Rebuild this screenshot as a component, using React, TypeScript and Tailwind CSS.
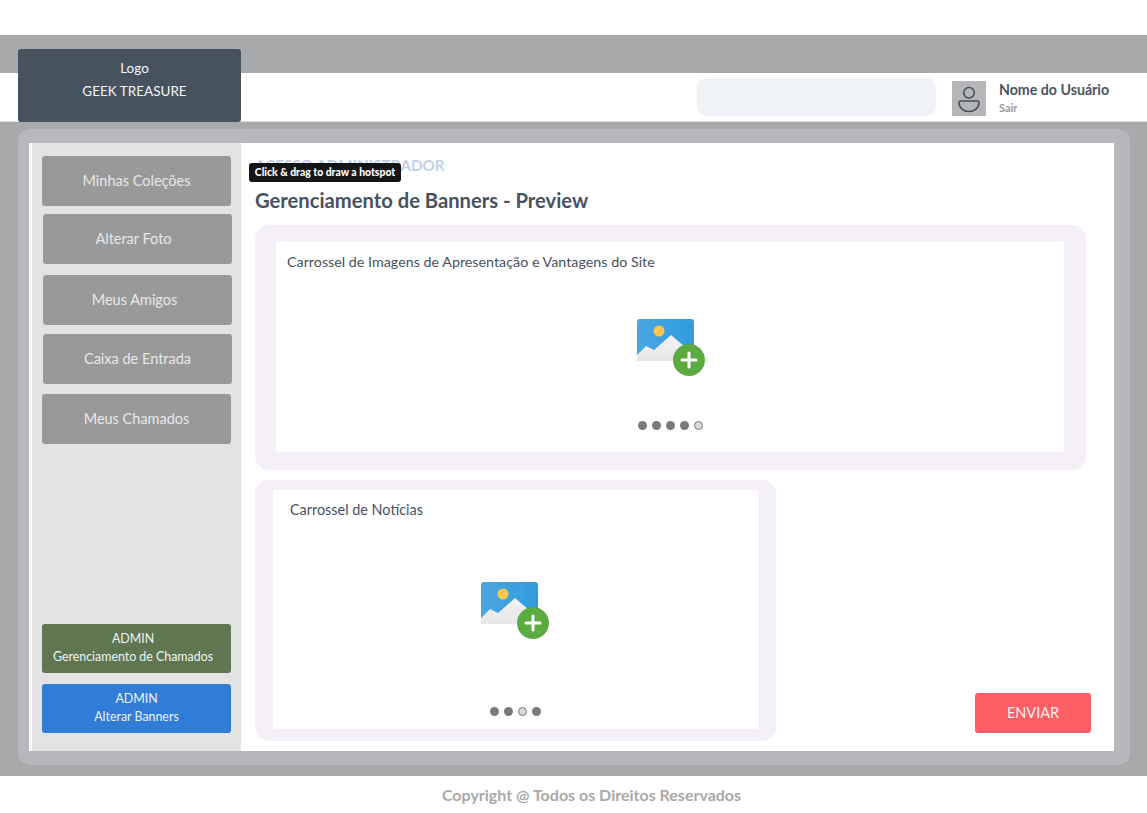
import React from "react";

function AddImage() {
  return (
    <svg width="70" height="58" viewBox="0 0 70 58" className="block blur-[0.4px]">
      <defs>
        <linearGradient id="sky" x1="0" y1="0" x2="1" y2="0">
          <stop offset="0" stopColor="#4aa7e2" />
          <stop offset="1" stopColor="#319bdc" />
        </linearGradient>
        <linearGradient id="mtn" x1="0" y1="0" x2="0" y2="1">
          <stop offset="0" stopColor="#f4f4f4" />
          <stop offset="1" stopColor="#e6e6e6" />
        </linearGradient>
      </defs>
      <path d="M3 0H54a3 3 0 0 1 3 3V38H0V3a3 3 0 0 1 3-3Z" fill="url(#sky)" />
      <circle cx="22" cy="12" r="5.5" fill="#fbc84f" />
      <path d="M0 36 L9 27 L17 31 L34 16 L48 28 L57 36 V42 H0 Z" fill="url(#mtn)" />
      <circle cx="52" cy="41" r="16" fill="#5bab42" />
      <path d="M52 34V48M45 41H59" stroke="#fff" strokeWidth="3" strokeLinecap="round" />
    </svg>
  );
}

function Dots({ hollow, count }: { hollow: number; count: number }) {
  return (
    <div className="flex items-center gap-[5px]">
      {Array.from({ length: count }).map((_, i) => (
        <span
          key={i}
          className={
            i === hollow
              ? "h-[9px] w-[9px] rounded-full border border-[#7a7a7a] bg-[#d8d8d8]"
              : "h-[9px] w-[9px] rounded-full bg-[#7a7a7a]"
          }
        />
      ))}
    </div>
  );
}

function SideButton({ label, className }: { label: string; className: string }) {
  return (
    <div
      className={
        "flex h-[50px] w-[189px] items-center justify-center rounded-[3px] bg-[#999999] pb-[1px] text-[14.5px] text-[#e8e8e8] " +
        className
      }
    >
      {label}
    </div>
  );
}

function AdminButton({ line, color, className }: { line: string; color: string; className: string }) {
  return (
    <div
      className={
        "flex h-[49px] w-[189px] flex-col items-center justify-center rounded-[3px] pb-[2px] text-[12.4px] leading-[18px] text-[#eef3f8] " +
        color +
        " " +
        className
      }
    >
      <span>ADMIN</span>
      <span>{line}</span>
    </div>
  );
}

export default function App() {
  return (
    <div className="flex h-[813px] w-[1147px] flex-col overflow-hidden bg-white font-['Lato','Noto_Sans',sans-serif]">
      <div className="h-[35px] shrink-0 bg-white" />
      <div className="h-[38px] shrink-0 bg-[#a8a9ab]" />
      <header className="flex h-[49px] shrink-0 items-start border-b border-[#dddddd] bg-white">
        <div className="ml-[18px] mt-[-24px] flex h-[73px] w-[223px] flex-col items-center justify-center rounded-[3px] bg-[#47525f] pb-[12px] pl-[10px] text-[13.5px] leading-[23px] text-[#f3f5f7]">
          <span>Logo</span>
          <span>GEEK TREASURE</span>
        </div>
        <div className="ml-[456px] mt-[5px] h-[38px] w-[239px] rounded-[10px] bg-[#eff2f6]" />
        <div className="ml-[16px] mt-[8px] flex h-[35px] w-[34px] items-center justify-center bg-[#b4b6b9]">
          <svg width="24" height="30" viewBox="0 0 24 30" fill="none" stroke="#474d56" strokeWidth="1.5">
            <circle cx="12" cy="8.7" r="5.3" />
            <path d="M3.5 17H20.5Q22 17 22 18.5C22 24 17 27.5 12 27.5C7 27.5 2 24 2 18.5Q2 17 3.5 17Z" strokeLinejoin="round" />
          </svg>
        </div>
        <div className="ml-[13px] mt-[7px] flex flex-col">
          <span className="text-[14.2px] font-bold leading-[19px] text-[#4d5560]">Nome do Usuário</span>
          <span className="mt-[1px] text-[11px] font-bold leading-[16px] text-[#9a9a9a]">Sair</span>
        </div>
      </header>
      <div className="flex h-[654px] shrink-0 flex-col bg-[#a8a9ab] pb-[11px] pl-[18px] pr-[17px] pt-[7px]">
        <div className="flex h-[636px] flex-col rounded-[12px] bg-[#b8b7bc] pb-[14px] pl-[11px] pr-[16px] pt-[14px]">
          <div className="flex h-[608px] bg-white pl-[3px]">
            <aside className="flex w-[209px] shrink-0 flex-col bg-[#e3e3e3] pl-[10px]">
              <SideButton label="Minhas Coleções" className="mt-[13px]" />
              <SideButton label="Alterar Foto" className="ml-[1px] mt-[8px] pr-[8px]" />
              <SideButton label="Meus Amigos" className="ml-[1px] mt-[11px] pr-[6px]" />
              <SideButton label="Caixa de Entrada" className="ml-[1px] mt-[9px]" />
              <SideButton label="Meus Chamados" className="mt-[10px]" />
              <AdminButton line="Gerenciamento de Chamados" color="bg-[#5f7750] pr-[7px]" className="mt-auto" />
              <AdminButton line="Alterar Banners" color="bg-[#317cd6]" className="mb-[18px] mt-[11px]" />
            </aside>
            <main className="relative min-w-0 flex-1 pl-[14px]">
              <div className="pt-[13px] text-[15.2px] font-bold leading-[18px] text-[#c2d1e5]">ACESSO ADMINISTRADOR</div>
              <div className="absolute left-[8px] top-[20px] flex h-[19px] w-[152px] items-center justify-center rounded-[3px] bg-[#151515] text-[10.4px] font-black text-white">
                Click &amp; drag to draw a hotspot
              </div>
              <h1 className="mt-[12px] text-[20.2px] font-bold leading-[28px] text-[#47525f]">
                Gerenciamento de Banners - Preview
              </h1>
              <section className="mt-[11px] h-[245px] w-[831px] rounded-[14px] bg-[#f5f0f8] pl-[21px] pr-[22px] pt-[17px]">
                <div className="flex h-[210px] flex-col items-center bg-white">
                  <p className="w-full pl-[11px] pt-[11px] text-[14.3px] leading-[18px] text-[#47525f]">
                    Carrossel de Imagens de Apresentação e Vantagens do Site
                  </p>
                  <div className="ml-[4px] mt-[48px]">
                    <AddImage />
                  </div>
                  <div className="mt-[44px]">
                    <Dots hollow={4} count={5} />
                  </div>
                </div>
              </section>
              <div className="mt-[10px] flex items-start">
                <section className="h-[261px] w-[521px] rounded-[14px] bg-[#f5f0f8] pl-[18px] pr-[18px] pt-[10px]">
                  <div className="flex h-[239px] flex-col items-center bg-white">
                    <p className="w-full pl-[17px] pt-[11px] text-[14.4px] leading-[18px] text-[#47525f]">
                      Carrossel de Notícias
                    </p>
                    <div className="ml-[1px] mt-[63px]">
                      <AddImage />
                    </div>
                    <div className="mt-[67px]">
                      <Dots hollow={2} count={4} />
                    </div>
                  </div>
                </section>
                <div className="ml-[199px] mt-[213px] flex h-[40px] w-[116px] items-center justify-center rounded-[3px] bg-[#fe5e66] pb-[1px] text-[14.5px] text-[#fdf1ee]">
                  ENVIAR
                </div>
              </div>
            </main>
          </div>
        </div>
      </div>
      <footer className="flex flex-1 items-start justify-center pl-[36px] pt-[9px] text-[16px] font-bold leading-[20px] text-[#a9a9a9]">
        Copyright @ Todos os Direitos Reservados
      </footer>
    </div>
  );
}
